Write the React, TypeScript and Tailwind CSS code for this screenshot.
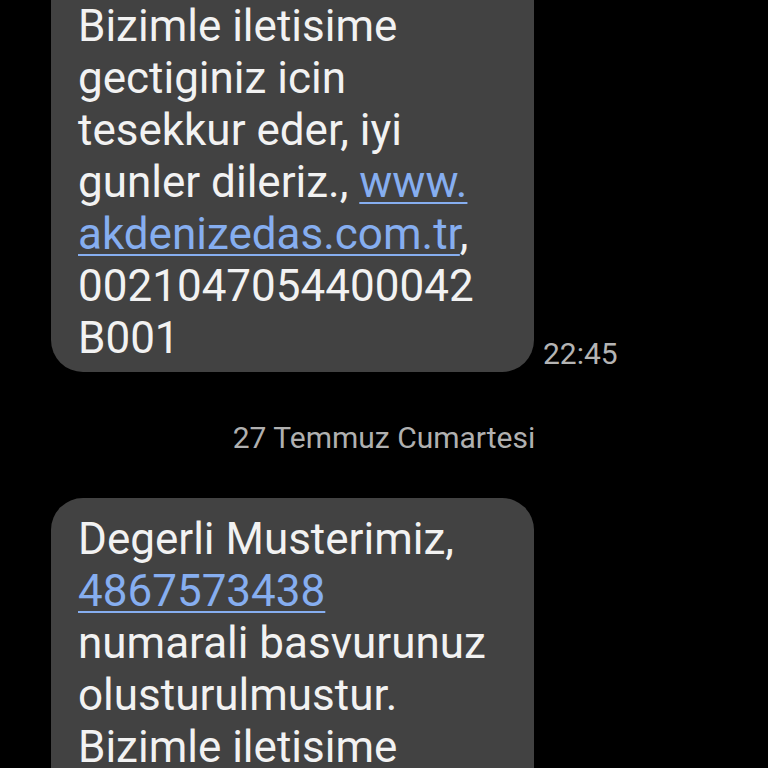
import React from 'react';

const Link = ({ children }: { children: React.ReactNode }) => (
  <span className="text-[#86aef0] underline decoration-[2px] underline-offset-[5px]">{children}</span>
);

export default function App() {
  return (
    <div className="h-[768px] w-[768px] overflow-hidden bg-black font-['Roboto',sans-serif]">
      {/* first message, scrolled so only its end is visible */}
      <div className="flex items-end pl-[51px]">
        <div className="w-[483px] rounded-b-[32px] bg-[#424242] pb-[8px] pl-[27px] pr-4 text-[44px] leading-[52px] text-[#f2f2f2]">
          Bizimle iletisime
          <br />
          gectiginiz icin
          <br />
          tesekkur eder, iyi
          <br />
          gunler dileriz., <Link>www.</Link>
          <br />
          <Link>akdenizedas.com.tr</Link>,
          <br />
          0021047054400042
          <br />
          B001
        </div>
        <span className="mb-[2px] ml-[9px] text-[30px] leading-[32px] text-[#b4b4b4]">22:45</span>
      </div>

      <div className="flex h-[126px] items-center justify-center pt-[5px] text-[30px] text-[#b0b0b0]">
        27 Temmuz Cumartesi
      </div>

      <div className="pl-[51px]">
        <div className="w-[483px] rounded-t-[32px] bg-[#424242] pt-[15px] pb-8 pl-[27px] pr-4 text-[44px] leading-[52px] text-[#f2f2f2]">
          Degerli Musterimiz,
          <br />
          <Link>4867573438</Link>
          <br />
          numarali basvurunuz
          <br />
          olusturulmustur.
          <br />
          Bizimle iletisime
        </div>
      </div>
    </div>
  );
}
